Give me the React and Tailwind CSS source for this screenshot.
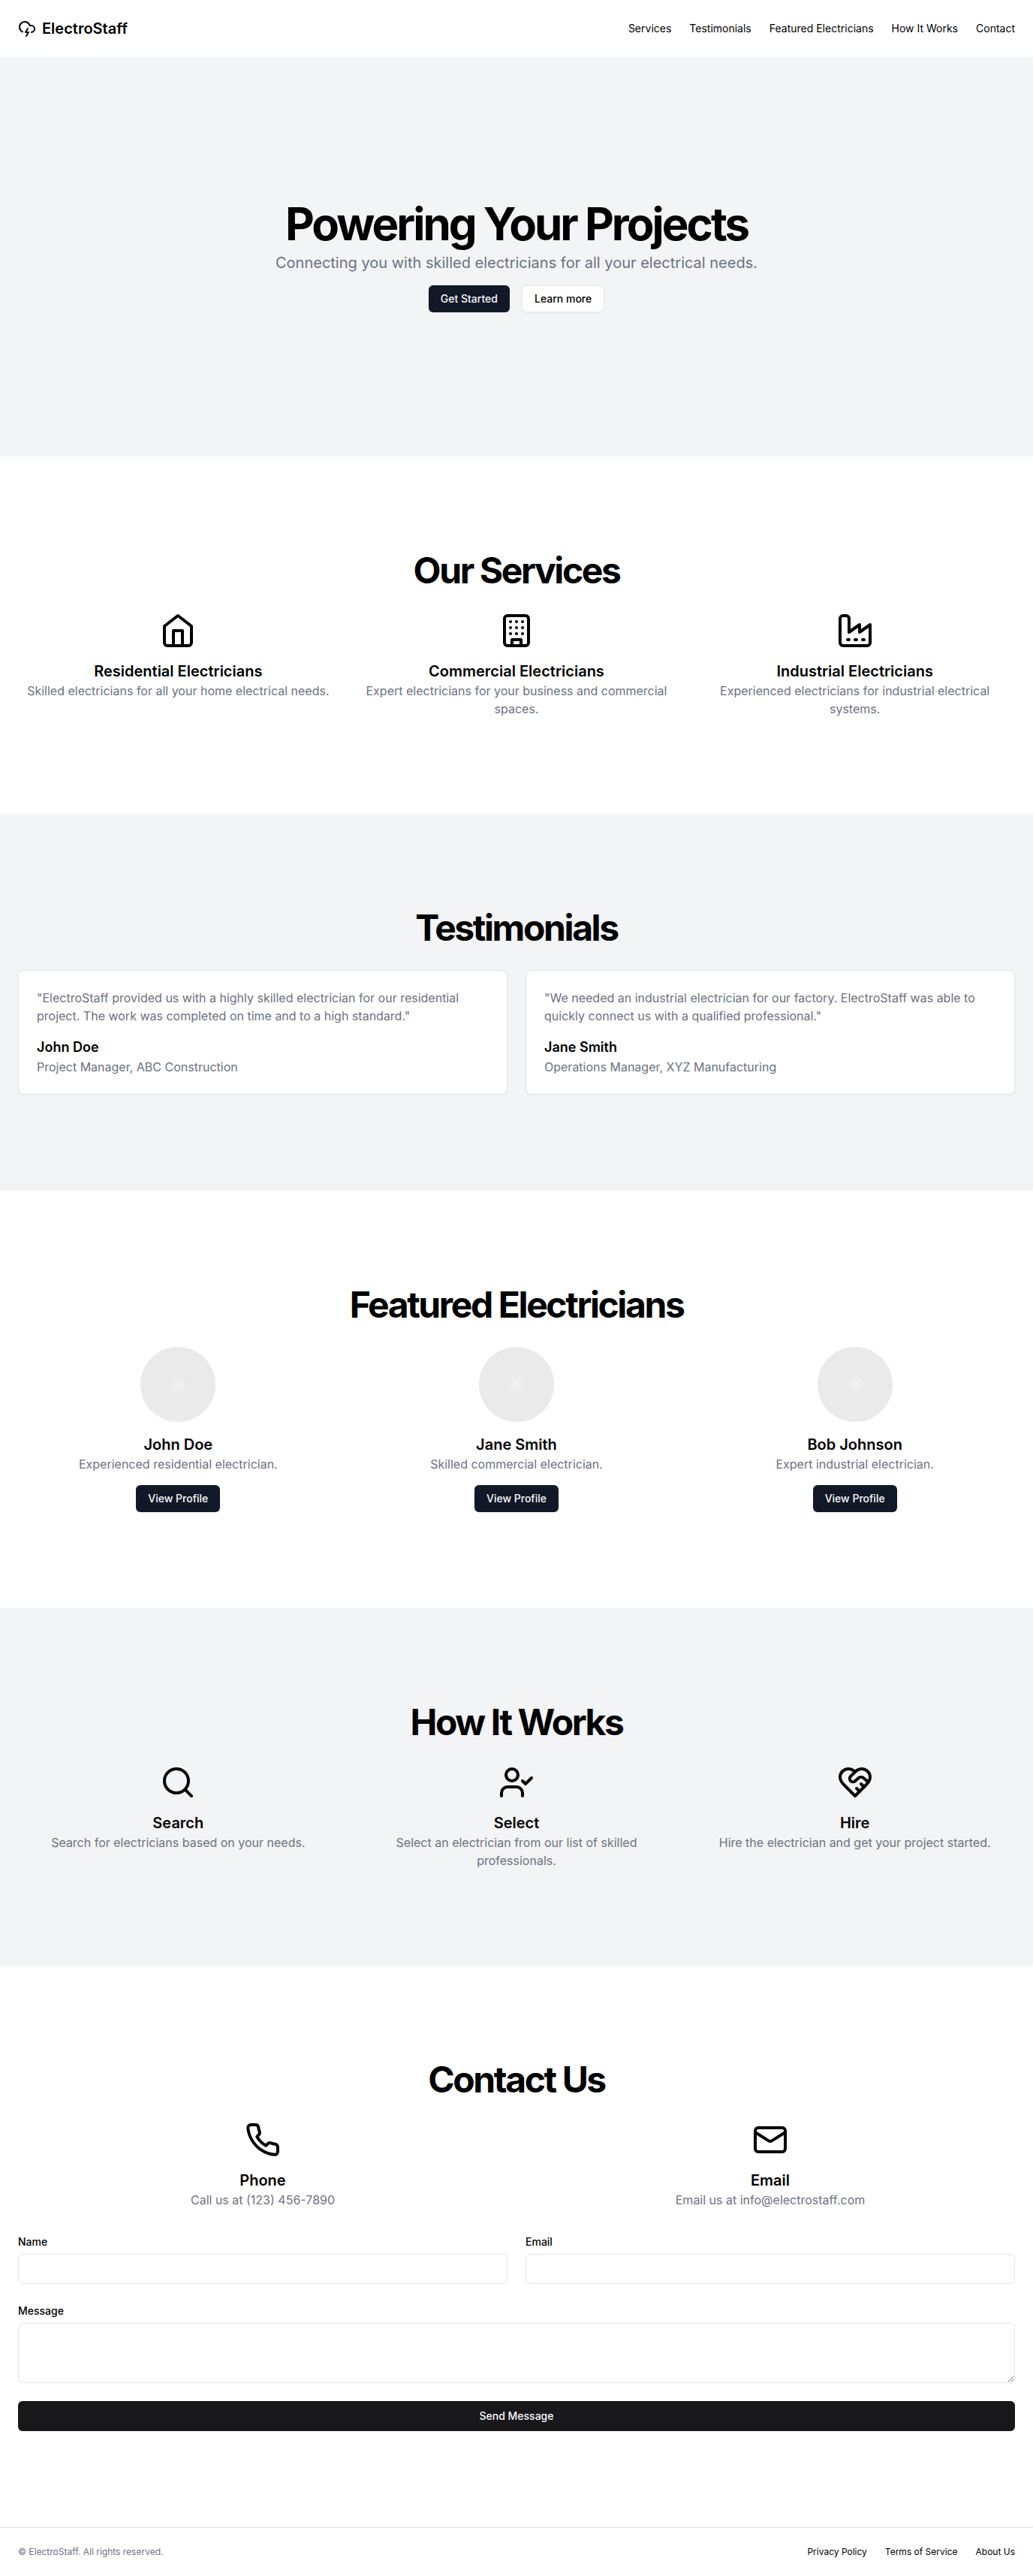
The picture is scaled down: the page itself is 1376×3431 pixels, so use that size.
const darkButton =
  "inline-flex h-9 items-center justify-center rounded-md bg-[#111827] px-4 text-sm font-medium text-gray-50 shadow-xs";
const muted = "text-[#6b7280]";
const field = "w-full rounded-md border border-[#e4e4e7] bg-white px-3 py-2 text-sm";

function Icon({ className, children }) {
  return (
    <svg
      className={className}
      viewBox="0 0 24 24"
      fill="none"
      stroke="currentColor"
      strokeWidth="2"
      strokeLinecap="round"
      strokeLinejoin="round"
      aria-hidden="true"
    >
      {children}
    </svg>
  );
}

const icons = {
  home: (
    <>
      <path d="m3 9 9-7 9 7v11a2 2 0 0 1-2 2H5a2 2 0 0 1-2-2z" />
      <path d="M9 22V12h6v10" />
    </>
  ),
  building: (
    <>
      <rect width="16" height="20" x="4" y="2" rx="2" ry="2" />
      <path d="M9 22v-4h6v4" />
      <path d="M8 6h.01M16 6h.01M12 6h.01M12 10h.01M12 14h.01M16 10h.01M16 14h.01M8 10h.01M8 14h.01" />
    </>
  ),
  factory: (
    <>
      <path d="M2 20a2 2 0 0 0 2 2h16a2 2 0 0 0 2-2V8l-7 5V8l-7 5V4a2 2 0 0 0-2-2H4a2 2 0 0 0-2 2Z" />
      <path d="M17 18h1M12 18h1M7 18h1" />
    </>
  ),
  search: (
    <>
      <circle cx="11" cy="11" r="8" />
      <path d="m21 21-4.3-4.3" />
    </>
  ),
  userCheck: (
    <>
      <path d="M16 21v-2a4 4 0 0 0-4-4H6a4 4 0 0 0-4 4v2" />
      <circle cx="9" cy="7" r="4" />
      <path d="m16 11 2 2 4-4" />
    </>
  ),
  handshake: (
    <>
      <path d="M19 14c1.49-1.46 3-3.21 3-5.5A5.5 5.5 0 0 0 16.5 3c-1.76 0-3 .5-4.5 2-1.5-1.5-2.74-2-4.5-2A5.5 5.5 0 0 0 2 8.5c0 2.3 1.5 4.05 3 5.5l7 7Z" />
      <path d="M12 5 9.04 7.96a2.17 2.17 0 0 0 0 3.08c.82.82 2.13.85 3 .07l2.07-1.9a2.82 2.82 0 0 1 3.79 0l2.96 2.66" />
      <path d="m18 15-2-2M15 18l-2-2" />
    </>
  ),
  phone: (
    <path d="M22 16.92v3a2 2 0 0 1-2.18 2 19.79 19.79 0 0 1-8.63-3.07 19.5 19.5 0 0 1-6-6 19.79 19.79 0 0 1-3.07-8.67A2 2 0 0 1 4.11 2h3a2 2 0 0 1 2 1.72 12.84 12.84 0 0 0 .7 2.81 2 2 0 0 1-.45 2.11L8.09 9.91a16 16 0 0 0 6 6l1.27-1.27a2 2 0 0 1 2.11-.45 12.84 12.84 0 0 0 2.81.7A2 2 0 0 1 22 16.92z" />
  ),
  mail: (
    <>
      <rect width="20" height="16" x="2" y="4" rx="2" />
      <path d="m22 7-8.97 5.7a1.94 1.94 0 0 1-2.06 0L2 7" />
    </>
  ),
  cloud: (
    <>
      <path d="M6 16.326A7 7 0 1 1 15.71 8h1.79a4.5 4.5 0 0 1 .5 8.973" />
      <path d="m13 12-3 5h4l-3 5" />
    </>
  ),
};

function Section({ id, title, gray, children }) {
  return (
    <section id={id} className={gray ? "bg-gray-100 px-6 py-32" : "px-6 py-32"}>
      <h2 className="mb-8 text-center text-5xl font-bold tracking-tighter">{title}</h2>
      {children}
    </section>
  );
}

function Feature({ icon, title, text }) {
  return (
    <div className="flex flex-col items-center text-center">
      <Icon className="mb-4 size-12">{icons[icon]}</Icon>
      <h3 className="text-xl font-semibold">{title}</h3>
      <p className={muted}>{text}</p>
    </div>
  );
}

function Testimonial({ quote, name, role }) {
  return (
    <article className="rounded-lg border border-[#e4e4e7] bg-white p-6 shadow-xs">
      <p className={`mb-4 ${muted}`}>{quote}</p>
      <h3 className="text-lg font-semibold">{name}</h3>
      <p className={muted}>{role}</p>
    </article>
  );
}

function Electrician({ name, text }) {
  return (
    <div className="flex flex-col items-center text-center">
      <svg viewBox="0 0 100 100" className="mb-4 size-25" role="img" aria-label={name}>
        <circle cx="50" cy="50" r="50" fill="#eaeaea" />
        <circle cx="50" cy="50" r="11" fill="#ededed" />
        <circle cx="50" cy="50" r="3" fill="none" stroke="#f4f4f4" strokeWidth="2" />
      </svg>
      <h3 className="text-xl font-semibold">{name}</h3>
      <p className={`mb-4 ${muted}`}>{text}</p>
      <button type="button" className={darkButton}>View Profile</button>
    </div>
  );
}

export default function App() {
  return (
    <div className="bg-white font-['Inter',sans-serif] text-black">
      <header className="flex items-center justify-between p-6">
        <a href="#top" className="flex items-center gap-2">
          <Icon className="size-6">{icons.cloud}</Icon>
          <span className="text-xl font-semibold">ElectroStaff</span>
        </a>
        <nav className="flex gap-6 text-sm">
          <a href="#services">Services</a>
          <a href="#testimonials">Testimonials</a>
          <a href="#featured">Featured Electricians</a>
          <a href="#how">How It Works</a>
          <a href="#contact">Contact</a>
        </nav>
      </header>
      <main>
        <section id="top" className="flex flex-col items-center bg-gray-100 px-6 py-48 text-center">
          <h1 className="text-6xl font-bold tracking-tighter">Powering Your Projects</h1>
          <p className={`mt-2 text-xl ${muted}`}>
            Connecting you with skilled electricians for all your electrical needs.
          </p>
          <div className="mt-4 flex gap-4">
            <button type="button" className={darkButton}>Get Started</button>
            <button
              type="button"
              className="inline-flex h-9 items-center justify-center rounded-md border border-[#e5e7eb] bg-white px-4 text-sm font-medium shadow-xs"
            >
              Learn more
            </button>
          </div>
        </section>
        <Section id="services" title="Our Services">
          <div className="grid grid-cols-3 gap-6">
            <Feature icon="home" title="Residential Electricians" text="Skilled electricians for all your home electrical needs." />
            <Feature icon="building" title="Commercial Electricians" text="Expert electricians for your business and commercial spaces." />
            <Feature icon="factory" title="Industrial Electricians" text="Experienced electricians for industrial electrical systems." />
          </div>
        </Section>
        <Section id="testimonials" title="Testimonials" gray>
          <div className="grid grid-cols-2 gap-6">
            <Testimonial
              quote={'"ElectroStaff provided us with a highly skilled electrician for our residential project. The work was completed on time and to a high standard."'}
              name="John Doe"
              role="Project Manager, ABC Construction"
            />
            <Testimonial
              quote={'"We needed an industrial electrician for our factory. ElectroStaff was able to quickly connect us with a qualified professional."'}
              name="Jane Smith"
              role="Operations Manager, XYZ Manufacturing"
            />
          </div>
        </Section>
        <Section id="featured" title="Featured Electricians">
          <div className="grid grid-cols-3 gap-6">
            <Electrician name="John Doe" text="Experienced residential electrician." />
            <Electrician name="Jane Smith" text="Skilled commercial electrician." />
            <Electrician name="Bob Johnson" text="Expert industrial electrician." />
          </div>
        </Section>
        <Section id="how" title="How It Works" gray>
          <div className="grid grid-cols-3 gap-6">
            <Feature icon="search" title="Search" text="Search for electricians based on your needs." />
            <Feature icon="userCheck" title="Select" text="Select an electrician from our list of skilled professionals." />
            <Feature icon="handshake" title="Hire" text="Hire the electrician and get your project started." />
          </div>
        </Section>
        <Section id="contact" title="Contact Us">
          <div className="grid grid-cols-2 gap-6">
            <Feature icon="phone" title="Phone" text="Call us at (123) 456-7890" />
            <Feature icon="mail" title="Email" text="Email us at info@electrostaff.com" />
          </div>
          <form className="mt-8 grid grid-cols-2 gap-6" onSubmit={(e) => e.preventDefault()}>
            <div>
              <label htmlFor="name" className="mb-1 block text-sm leading-6 font-medium">Name</label>
              <input id="name" type="text" className={`block h-10 ${field}`} />
            </div>
            <div>
              <label htmlFor="email" className="mb-1 block text-sm leading-6 font-medium">Email</label>
              <input id="email" type="email" className={`block h-10 ${field}`} />
            </div>
            <div className="col-span-2">
              <label htmlFor="message" className="mb-1 block text-sm leading-6 font-medium">Message</label>
              <textarea id="message" className={`block h-20 ${field}`} />
            </div>
            <button
              type="submit"
              className="col-span-2 h-10 rounded-md bg-[#18181b] px-4 text-sm font-medium text-[#fafafa]"
            >
              Send Message
            </button>
          </form>
        </Section>
      </main>
      <footer className="flex items-center justify-between border-t border-[#e4e4e7] p-6 text-xs">
        <p className={muted}>© ElectroStaff. All rights reserved.</p>
        <nav className="flex gap-6">
          <a href="#privacy">Privacy Policy</a>
          <a href="#terms">Terms of Service</a>
          <a href="#about">About Us</a>
        </nav>
      </footer>
    </div>
  );
}
